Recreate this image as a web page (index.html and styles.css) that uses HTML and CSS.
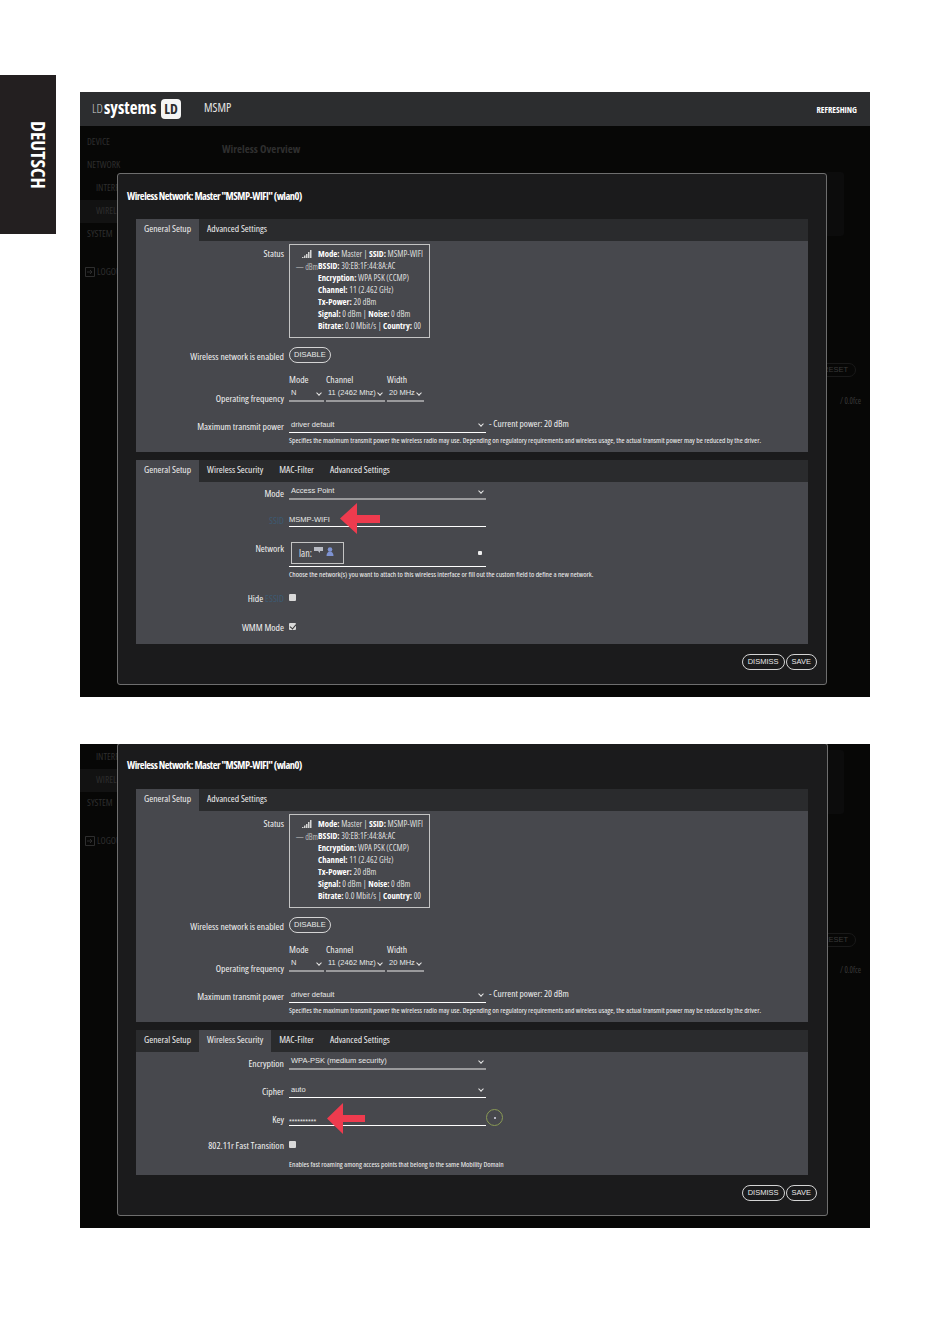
FILE: index.html
```html
<!DOCTYPE html>
<html lang="de">
<head>
    <meta charset="UTF-8">
    <meta name="viewport" content="width=device-width, initial-scale=1.0">
    <title>LD Systems MSMP</title>
    <link rel="stylesheet" href="styles.css">
</head>
<body>
    <div class="lang-tab"><span>DEUTSCH</span></div>

    <!-- first screenshot -->
    <div class="shot shot-one">
        <div class="topbar">
            <div class="logo"><span class="logo-ld">LD</span><span class="logo-sys">systems</span><span class="logo-box">LD</span></div>
            <span class="brand">MSMP</span>
            <span class="refreshing">REFRESHING</span>
        </div>
        <div class="backdrop">
            <div class="side">
                <div class="side-item">DEVICE</div>
                <div class="side-item">NETWORK</div>
                <div class="side-item sub">INTERFACES</div>
                <div class="side-item sub on">WIRELESS</div>
                <div class="side-item">SYSTEM</div>
                <div class="side-item logout"><svg class="logout-icon" viewBox="0 0 10 10"><path d="M.5.5h9v9h-9zM2 5h5M5 3l2 2-2 2"/></svg>LOGOUT</div>
            </div>
            <div class="back-main">
                <div class="back-title">Wireless Overview</div>
                <div class="back-card"></div>
                <div class="back-reset">RESET</div>
                <div class="back-ver">/ 0.0fce</div>
            </div>
        </div>

        <div class="modal">
            <div class="modal-title">Wireless Network: Master "MSMP-WIFI" (wlan0)</div>

            <div class="section">
                <div class="tabs">
                    <div class="tab active">General Setup</div>
                    <div class="tab">Advanced Settings</div>
                </div>
                <div class="section-body sec-device">
                    <div class="row row-status">
                        <div class="label">Status</div>
                        <div class="status-box">
                            <div class="signal">
                                <svg class="bars" viewBox="0 0 10 8"><path d="M0 7h1.500v1H0zM2 5.500h1.500V8H2zM4 4h1.500v4H4zM6 2h1.500v6H6zM8 0h1.500v8H8z"/></svg>
                                <span>— dBm</span>
                            </div>
                            <div class="status-text">
                                <b>Mode:</b> Master | <b>SSID:</b> MSMP-WIFI<br>
                                <b>BSSID:</b> 30:EB:1F:44:8A:AC<br>
                                <b>Encryption:</b> WPA PSK (CCMP)<br>
                                <b>Channel:</b> 11 (2.462 GHz)<br>
                                <b>Tx-Power:</b> 20 dBm<br>
                                <b>Signal:</b> 0 dBm | <b>Noise:</b> 0 dBm<br>
                                <b>Bitrate:</b> 0.0 Mbit/s | <b>Country:</b> 00
                            </div>
                        </div>
                    </div>
                    <div class="row row-enable">
                        <div class="label">Wireless network is enabled</div>
                        <div class="pill">DISABLE</div>
                    </div>
                    <div class="row row-freq">
                        <div class="label">Operating frequency</div>
                        <div class="freq">
                            <div class="freq-col w-mode"><span>Mode</span><div class="select gray"><em>N</em><i class="chev"></i></div></div>
                            <div class="freq-col w-chan"><span>Channel</span><div class="select gray"><em>11 (2462 Mhz)</em><i class="chev"></i></div></div>
                            <div class="freq-col w-width"><span>Width</span><div class="select gray"><em>20 MHz</em><i class="chev"></i></div></div>
                        </div>
                    </div>
                    <div class="row row-power">
                        <div class="label">Maximum transmit power</div>
                        <div class="power">
                            <div class="select field"><em>driver default</em><i class="chev"></i></div>
                            <span class="power-note">- Current power: 20 dBm</span>
                        </div>
                    </div>
                    <div class="row row-help">
                        <div></div>
                        <div class="help">Specifies the maximum transmit power the wireless radio may use. Depending on regulatory requirements and wireless usage, the actual transmit power may be reduced by the driver.</div>
                    </div>
                </div>
            </div>

            <div class="section">
                <div class="tabs">
                    <div class="tab active">General Setup</div>
                    <div class="tab">Wireless Security</div>
                    <div class="tab">MAC-Filter</div>
                    <div class="tab">Advanced Settings</div>
                </div>
                <div class="section-body sec-iface">
                    <div class="row">
                        <div class="label">Mode</div>
                        <div class="select field gray"><em>Access Point</em><i class="chev"></i></div>
                    </div>
                    <div class="row row-ssid">
                        <div class="label label-blue">SSID</div>
                        <div class="select field"><em class="flush">MSMP-WIFI</em></div>
                    </div>
                    <div class="row row-net">
                        <div class="label">Network</div>
                        <div class="select field net">
                            <div class="net-box">
                                <span>lan:</span>
                                <svg class="net-icon" viewBox="0 0 20 9"><path fill="#b9bcc4" d="M0 0h9v4H6v2L4 4H0z"/><circle cx="16" cy="2.500" r="2.300" fill="#7e93d2"/><path fill="#7e93d2" d="M12.500 9c0-3 1.500-4.500 3.500-4.500S19.500 6 19.500 9z"/></svg>
                            </div>
                            <i class="dot-arrow"></i>
                        </div>
                    </div>
                    <div class="row row-nethelp">
                        <div></div>
                        <div class="help">Choose the network(s) you want to attach to this wireless interface or fill out the custom field to define a new network.</div>
                    </div>
                    <div class="row row-hide">
                        <div class="label">Hide <span class="label-blue">ESSID</span></div>
                        <i class="check"></i>
                    </div>
                    <div class="row row-wmm">
                        <div class="label">WMM Mode</div>
                        <i class="check checked"></i>
                    </div>
                </div>
            </div>

            <div class="modal-foot">
                <div class="pill">DISMISS</div>
                <div class="pill">SAVE</div>
            </div>
        </div>

        <svg class="arrow arrow-one" viewBox="0 0 40 31"><path d="M0 15.500 17 0v12h23v8H17v11z"/></svg>
    </div>

    <!-- second screenshot -->
    <div class="shot shot-two">
        <div class="backdrop">
            <div class="side">
                <div class="side-item sub">INTERFACES</div>
                <div class="side-item sub on">WIRELESS</div>
                <div class="side-item">SYSTEM</div>
                <div class="side-item logout"><svg class="logout-icon" viewBox="0 0 10 10"><path d="M.5.5h9v9h-9zM2 5h5M5 3l2 2-2 2"/></svg>LOGOUT</div>
            </div>
            <div class="back-main">
                <div class="back-card"></div>
                <div class="back-reset">RESET</div>
                <div class="back-ver">/ 0.0fce</div>
            </div>
        </div>

        <div class="modal">
            <div class="modal-title">Wireless Network: Master "MSMP-WIFI" (wlan0)</div>

            <div class="section">
                <div class="tabs">
                    <div class="tab active">General Setup</div>
                    <div class="tab">Advanced Settings</div>
                </div>
                <div class="section-body sec-device">
                    <div class="row row-status">
                        <div class="label">Status</div>
                        <div class="status-box">
                            <div class="signal">
                                <svg class="bars" viewBox="0 0 10 8"><path d="M0 7h1.500v1H0zM2 5.500h1.500V8H2zM4 4h1.500v4H4zM6 2h1.500v6H6zM8 0h1.500v8H8z"/></svg>
                                <span>— dBm</span>
                            </div>
                            <div class="status-text">
                                <b>Mode:</b> Master | <b>SSID:</b> MSMP-WIFI<br>
                                <b>BSSID:</b> 30:EB:1F:44:8A:AC<br>
                                <b>Encryption:</b> WPA PSK (CCMP)<br>
                                <b>Channel:</b> 11 (2.462 GHz)<br>
                                <b>Tx-Power:</b> 20 dBm<br>
                                <b>Signal:</b> 0 dBm | <b>Noise:</b> 0 dBm<br>
                                <b>Bitrate:</b> 0.0 Mbit/s | <b>Country:</b> 00
                            </div>
                        </div>
                    </div>
                    <div class="row row-enable">
                        <div class="label">Wireless network is enabled</div>
                        <div class="pill">DISABLE</div>
                    </div>
                    <div class="row row-freq">
                        <div class="label">Operating frequency</div>
                        <div class="freq">
                            <div class="freq-col w-mode"><span>Mode</span><div class="select gray"><em>N</em><i class="chev"></i></div></div>
                            <div class="freq-col w-chan"><span>Channel</span><div class="select gray"><em>11 (2462 Mhz)</em><i class="chev"></i></div></div>
                            <div class="freq-col w-width"><span>Width</span><div class="select gray"><em>20 MHz</em><i class="chev"></i></div></div>
                        </div>
                    </div>
                    <div class="row row-power">
                        <div class="label">Maximum transmit power</div>
                        <div class="power">
                            <div class="select field"><em>driver default</em><i class="chev"></i></div>
                            <span class="power-note">- Current power: 20 dBm</span>
                        </div>
                    </div>
                    <div class="row row-help">
                        <div></div>
                        <div class="help">Specifies the maximum transmit power the wireless radio may use. Depending on regulatory requirements and wireless usage, the actual transmit power may be reduced by the driver.</div>
                    </div>
                </div>
            </div>

            <div class="section">
                <div class="tabs">
                    <div class="tab">General Setup</div>
                    <div class="tab active">Wireless Security</div>
                    <div class="tab">MAC-Filter</div>
                    <div class="tab">Advanced Settings</div>
                </div>
                <div class="section-body sec-security">
                    <div class="row">
                        <div class="label">Encryption</div>
                        <div class="select field gray"><em>WPA-PSK (medium security)</em><i class="chev"></i></div>
                    </div>
                    <div class="row row-cipher">
                        <div class="label">Cipher</div>
                        <div class="select field"><em>auto</em><i class="chev"></i></div>
                    </div>
                    <div class="row row-key">
                        <div class="label">Key</div>
                        <div class="key-wrap">
                            <div class="select field"><em class="flush key-text">**********</em></div>
                            <div class="eye"><i></i></div>
                        </div>
                    </div>
                    <div class="row row-ft">
                        <div class="label">802.11r Fast Transition</div>
                        <i class="check"></i>
                    </div>
                    <div class="row row-fthelp">
                        <div></div>
                        <div class="help">Enables fast roaming among access points that belong to the same Mobility Domain</div>
                    </div>
                </div>
            </div>

            <div class="modal-foot">
                <div class="pill">DISMISS</div>
                <div class="pill">SAVE</div>
            </div>
        </div>

        <svg class="arrow arrow-two" viewBox="0 0 38 31"><path d="M0 15.500 16 0v12h22v7H16v12z"/></svg>
    </div>
</body>
</html>
```

FILE: styles.css
```css
* {
    box-sizing: border-box;
}

body {
    margin: 0;
    height: 1332px;
    padding: 92px 80px 0;
    background: #fff;
    font-family: "Open Sans", "Liberation Sans", sans-serif;
    font-stretch: 75%;
    color: #efefef;
    overflow: hidden;
}

/* language tab on the page margin */
.lang-tab {
    position: absolute;
    left: 0;
    top: 75px;
    width: 56px;
    height: 159px;
    background: #231f20;
    display: flex;
    justify-content: flex-end;
    padding: 46px 8px 0 0;
}

.lang-tab span {
    writing-mode: vertical-rl;
    color: #fff;
    font-weight: bold;
    font-size: 19.500px;
    line-height: 20px;
    height: 70px;
}

.shot {
    position: relative;
    width: 790px;
    background: #070706;
    overflow: hidden;
}

.shot-one {
    height: 605px;
}

.shot-two {
    height: 484px;
    margin-top: 47px;
}

/* top bar */
.topbar {
    height: 34px;
    background: #2c2d2f;
    display: flex;
    align-items: center;
    padding: 0 13px 0 12px;
}

.logo {
    display: flex;
    align-items: center;
    width: 112px;
}

.logo-ld {
    font-size: 13px;
    font-weight: 300;
    color: #ccc;
    width: 12px;
    margin-top: -3px;
}

.logo-sys {
    font-size: 17px;
    font-weight: bold;
    color: #fff;
    width: 57px;
    margin-top: -4px;
}

.logo-box {
    width: 20px;
    height: 20px;
    border-radius: 4px;
    background: #f4f4f4;
    color: #2c2d2f;
    font-size: 14px;
    font-weight: bold;
    text-align: center;
    line-height: 20px;
}

.brand {
    font-size: 12px;
    color: #e4e4e4;
    margin-top: -3px;
}

.refreshing {
    margin-left: auto;
    font-size: 8.500px;
    font-weight: bold;
    color: #fff;
}

/* dimmed page behind the modal */
.backdrop {
    display: flex;
    height: 100%;
}

.side {
    width: 132px;
    padding-top: 5px;
    font-size: 9.500px;
    color: #2e2e2e;
}

.shot-two .side {
    padding-top: 2px;
}

.side-item {
    height: 23px;
    line-height: 14px;
    padding: 4px 0 0 7px;
    white-space: nowrap;
}

.side-item.sub {
    padding-left: 16px;
}

.side-item.on {
    background: #121212;
}

.side-item.logout {
    margin-top: 15px;
    display: flex;
    align-items: flex-start;
    gap: 2px;
    padding-left: 5px;
}

.logout-icon {
    width: 10px;
    height: 10px;
    margin-top: 2px;
    flex: none;
    fill: none;
    stroke: #2e2e2e;
}

.back-main {
    flex: 1;
    position: relative;
    color: #2f2f2f;
}

.back-title {
    margin: 15px 0 0 10px;
    font-size: 11px;
    font-weight: bold;
}

.back-card {
    position: absolute;
    top: 46px;
    left: 612px;
    width: 20px;
    height: 64px;
    background: #0c0c0c;
    border-radius: 3px;
}

.shot-two .back-card {
    top: 6px;
}

.back-reset {
    position: absolute;
    top: 237px;
    left: 608px;
    width: 36px;
    height: 14px;
    border: 1px solid #191919;
    border-radius: 7px;
    padding-left: 2px;
    font-family: "Liberation Sans", sans-serif;
    font-size: 7.500px;
    line-height: 12px;
    color: #3a3a3a;
}

.shot-two .back-reset {
    top: 189px;
}

.back-ver {
    position: absolute;
    top: 269px;
    left: 628px;
    font-size: 8px;
    color: #3a3a3a;
}

.shot-two .back-ver {
    top: 220px;
}

/* modal */
.modal {
    position: absolute;
    left: 37px;
    top: 81px;
    width: 710px;
    height: 512px;
    background: #1b1b1c;
    border: 1px solid #6e6e6e;
    border-radius: 3px;
    padding: 0 18px;
}

.shot-two .modal {
    top: -1px;
    width: 711px;
    height: 473px;
}

.modal-title {
    height: 45px;
    margin-left: -9px;
    padding-top: 15px;
    font-size: 10.500px;
    letter-spacing: -0.500px;
    line-height: 14px;
    font-weight: bold;
    color: #fff;
}

.shot-two .modal-title {
    padding-top: 14px;
}

.section {
    margin-bottom: 8px;
    width: 672px;
}

.tabs {
    display: flex;
    height: 22px;
    background: #2a2b2d;
}

.tab {
    padding: 0 8px;
    font-size: 9.600px;
    line-height: 20px;
    color: #efefef;
}

.tab.active {
    background: #47484d;
}

.section-body {
    background: #47484d;
    padding-top: 3px;
}

.sec-device {
    height: 211px;
}

.sec-iface {
    height: 162px;
}

.sec-security {
    height: 123px;
}

/* label column + value column */
.row {
    display: grid;
    grid-template-columns: 148px 1fr;
    column-gap: 5px;
    align-items: end;
}

.label {
    text-align: right;
    font-size: 9.700px;
    line-height: 12px;
    color: #f2f2f2;
}

.label-blue {
    color: #3d5a72;
}

.row-status {
    align-items: start;
}

.row-status .label {
    margin-top: 4px;
}

.status-box {
    width: 141px;
    height: 94px;
    border: 1px solid #c4c4c4;
    display: flex;
    padding-top: 3px;
    font-size: 8.700px;
    line-height: 12px;
}

.signal {
    width: 28px;
    flex: none;
    display: flex;
    flex-direction: column;
    align-items: flex-end;
    font-size: 8px;
    color: #bbb;
    white-space: nowrap;
}

.bars {
    width: 10px;
    height: 8px;
    margin: 2px 6px 3px 0;
    fill: #d5d5d5;
}

.status-text {
    white-space: nowrap;
    color: #dedede;
}

.status-text b {
    color: #fff;
}

.pill {
    display: inline-block;
    height: 16px;
    padding: 0 5px;
    border: 1px solid #d4d4d4;
    border-radius: 8px;
    font-family: "Liberation Sans", sans-serif;
    font-size: 7.500px;
    line-height: 14px;
    color: #e8e8e8;
}

.row-enable {
    margin-top: 9px;
}

.row-enable .pill {
    justify-self: start;
    padding: 0 4px;
}

.row-freq {
    margin-top: 11px;
}

.row-freq .label {
    margin-bottom: -3px;
}

.freq {
    display: flex;
    gap: 2px;
}

.freq-col span {
    display: block;
    font-size: 9.700px;
    line-height: 12px;
    margin-bottom: 1px;
}

.w-mode {
    width: 35px;
}

.w-chan {
    width: 59px;
}

.w-width {
    width: 37px;
}

/* a select or text field is a line with text above it */
.select {
    display: flex;
    align-items: center;
    justify-content: space-between;
    height: 15px;
    border-bottom: 1px solid #fff;
    font-family: "Liberation Sans", sans-serif;
    font-size: 7.500px;
    color: #e8e8e8;
}

.select.gray {
    border-bottom: 2px solid #9a9a9c;
}

.select.field {
    width: 197px;
}

.select em {
    font-style: normal;
    padding: 0 0 2px 2px;
}

.select em.flush {
    padding-left: 0;
}

.chev {
    width: 4px;
    height: 4px;
    margin: -2px 3px 0 0;
    border-right: 1px solid #e8e8e8;
    border-bottom: 1px solid #e8e8e8;
    transform: rotate(45deg);
}

.row-power {
    margin-top: 16px;
}

.power {
    display: flex;
    align-items: flex-start;
    gap: 3px;
}

.power-note {
    font-size: 9.400px;
    line-height: 12px;
}

.row-help {
    margin-top: 2px;
}

.help {
    font-size: 7.500px;
    line-height: 10px;
    color: #f4f4f4;
    white-space: nowrap;
}

.row-ssid {
    margin-top: 13px;
}

.row-ssid .select {
    height: 14px;
}

.row-ssid .select em {
    padding-bottom: 1px;
}

.row-net {
    margin-top: 15px;
    align-items: start;
}

.row-net .label {
    margin-top: 1px;
}

.net {
    height: 25px;
    align-items: flex-start;
    padding-left: 2px;
}

.net-box {
    width: 53px;
    height: 22px;
    border: 1px solid #c4c4c4;
    display: flex;
    align-items: center;
    gap: 2px;
    padding: 0 0 1px 7px;
    font-family: "Open Sans", sans-serif;
    font-size: 10px;
}

.net-icon {
    width: 20px;
    height: 9px;
    margin-bottom: 3px;
}

.dot-arrow {
    width: 4px;
    height: 4px;
    margin: 9px 4px 0 0;
    background: #eee;
    border-radius: 1px;
}

.row-nethelp {
    margin-top: 2px;
}

.check {
    width: 7px;
    height: 7px;
    margin-top: 1px;
    background: #d9d9d9;
    border-radius: 1px;
    align-self: start;
    position: relative;
}

.check.checked::after {
    content: "";
    position: absolute;
    left: 2px;
    top: 0;
    width: 3px;
    height: 5px;
    border-right: 1px solid #333;
    border-bottom: 1px solid #333;
    transform: rotate(40deg);
}

.row-hide {
    margin-top: 14px;
    align-items: start;
}

.row-wmm {
    margin-top: 17px;
    align-items: start;
}

.row-cipher {
    margin-top: 13px;
}

.row-key {
    margin-top: 13px;
}

.select em.key-text {
    padding: 6px 0 0;
    font-size: 7px;
}

.key-wrap {
    position: relative;
    width: 197px;
}

.eye {
    position: absolute;
    left: 197px;
    top: -2px;
    width: 17px;
    height: 17px;
    border: 1px solid #8a9a55;
    border-radius: 50%;
    display: flex;
    align-items: center;
    justify-content: center;
}

.eye i {
    width: 2px;
    height: 2px;
    background: #dde;
    border-radius: 50%;
}

.row-ft {
    margin-top: 14px;
    align-items: start;
}

.row-fthelp {
    margin-top: 7px;
}

.modal-foot {
    display: flex;
    justify-content: flex-end;
    gap: 1px;
    width: 681px;
    padding-top: 2px;
}

/* red pointers drawn on top of the screenshots */
.arrow {
    position: absolute;
    fill: #ee3b4e;
}

.arrow-one {
    left: 260px;
    top: 411px;
    width: 40px;
    height: 31px;
}

.arrow-two {
    left: 247px;
    top: 359px;
    width: 38px;
    height: 31px;
}
```
